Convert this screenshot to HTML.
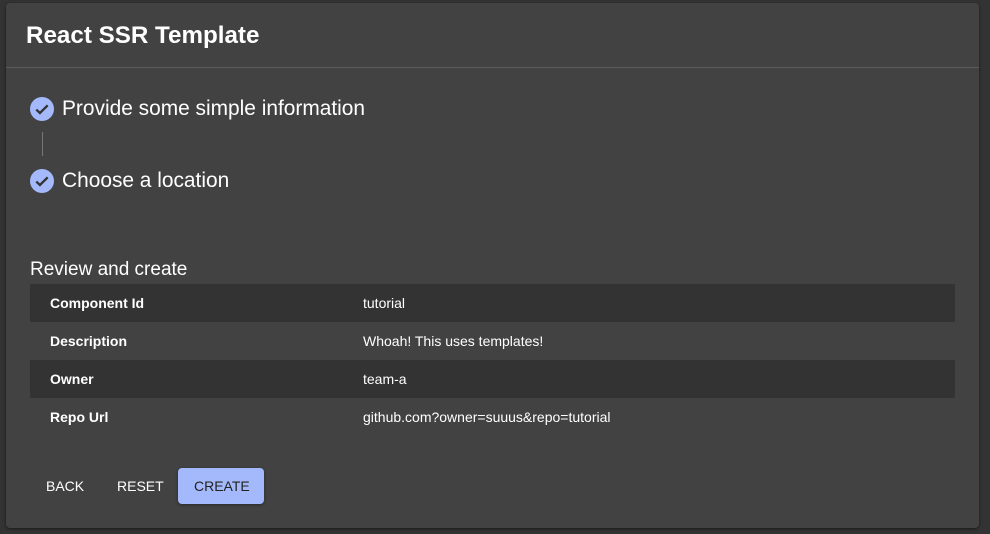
<!DOCTYPE html>
<html><head><style>
body{margin:0;background:#333;font-family:"Liberation Sans",sans-serif;color:#fff;width:990px;height:534px;overflow:hidden;position:relative}
.card{position:absolute;left:6px;top:3px;width:973px;height:525px;background:#424242;border-radius:4px;box-shadow:0 1px 3px rgba(0,0,0,.5)}
h1{position:absolute;left:20px;top:19px;margin:0;font-size:24.2px;font-weight:bold}
.div{position:absolute;left:0;right:0;top:64px;height:1px;background:#5c5c5c}
.step{position:absolute;left:24px;display:flex;align-items:center;font-size:20.9px}
.ic{width:24px;height:24px;border-radius:50%;background:#a4b9fb;margin-right:8px;display:flex;align-items:center;justify-content:center}
.line{position:absolute;left:36px;top:129px;width:1px;height:24px;background:#777}
h2{position:absolute;left:24px;top:256px;margin:0;font-size:19px;font-weight:normal}
table{position:absolute;left:24px;top:281px;width:925px;border-collapse:collapse;font-size:14px}
td{height:38px;padding:0}
td:first-child{padding-left:20px;font-weight:bold;width:313px}
tr.d{background:#333}
.btn{position:absolute;top:465px;height:36px;line-height:36px;font-size:14px;padding:0 16px;border-radius:4px}
</style></head><body>
<div class="card">
<h1>React SSR Template</h1>
<div class="div"></div>
<div class="step" style="top:94px"><div class="ic"><svg width="16" height="16" viewBox="0 0 14 14"><path d="M2 7.5l3.2 3L12 3.8" stroke="#333" stroke-width="2" fill="none"/></svg></div>Provide some simple information</div>
<div class="line"></div>
<div class="step" style="top:166px"><div class="ic"><svg width="16" height="16" viewBox="0 0 14 14"><path d="M2 7.5l3.2 3L12 3.8" stroke="#333" stroke-width="2" fill="none"/></svg></div>Choose a location</div>
<h2>Review and create</h2>
<table>
<tr class="d"><td>Component Id</td><td>tutorial</td></tr>
<tr><td>Description</td><td>Whoah! This uses templates!</td></tr>
<tr class="d"><td>Owner</td><td>team-a</td></tr>
<tr><td>Repo Url</td><td>github.com?owner=suuus&amp;repo=tutorial</td></tr>
</table>
<div class="btn" style="left:24px">BACK</div>
<div class="btn" style="left:95px">RESET</div>
<div class="btn" style="left:172px;width:54px;background:#a4b9fb;color:#222;box-shadow:0 1px 3px rgba(0,0,0,.4)">CREATE</div>
</div>
</body></html>
